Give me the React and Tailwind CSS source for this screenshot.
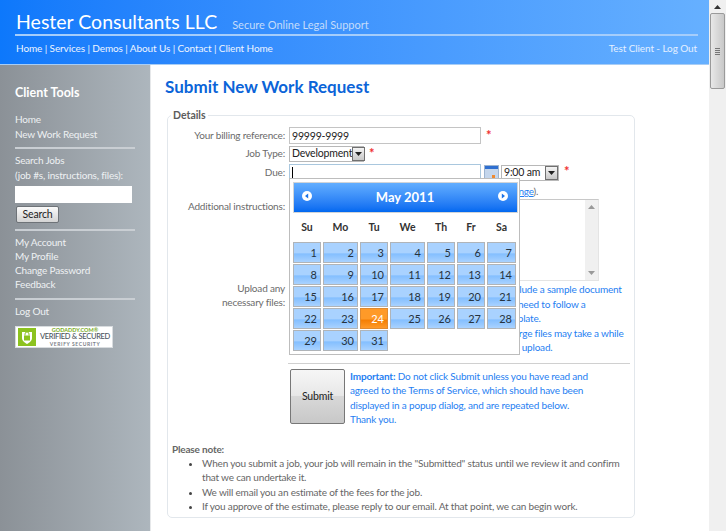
const font = { fontFamily: '"Lato", sans-serif' };

const weeks = [
  [1, 2, 3, 4, 5, 6, 7],
  [8, 9, 10, 11, 12, 13, 14],
  [15, 16, 17, 18, 19, 20, 21],
  [22, 23, 24, 25, 26, 27, 28],
  [29, 30, 31],
];

function Star() {
  return <span className="text-[#f03030] font-bold text-[13px] leading-none">*</span>;
}

function Arrow() {
  return (
    <span className="w-[13px] h-full border border-[#707070] bg-gradient-to-b from-[#f4f4f4] to-[#c8c8c8] flex items-center justify-center shrink-0">
      <svg width="7" height="4" viewBox="0 0 7 4"><path d="M0 0h7L3.5 4z" fill="#222" /></svg>
    </span>
  );
}

function CalendarIcon() {
  return (
    <svg width="15" height="16" viewBox="0 0 15 16" className="shrink-0">
      <rect x="0.5" y="0.5" width="14" height="15" fill="#c4d6ec" stroke="#9db4d0" />
      <rect x="1" y="1" width="13" height="3" fill="#2f6fd0" />
      <rect x="8" y="10" width="3" height="3" fill="#f08a30" />
    </svg>
  );
}

function CircleArrow({ dir }) {
  return (
    <svg width="10" height="10" viewBox="0 0 10 10">
      <circle cx="5" cy="5" r="5" fill="#fff" />
      <path d={dir === "left" ? "M6.2 2.5v5L3 5z" : "M3.8 2.5v5L7 5z"} fill="#1a72e8" />
    </svg>
  );
}

function Datepicker() {
  return (
    <div className="absolute left-[121px] top-[56px] w-[231px] h-[177px] bg-white border border-[#bdbdbd] pl-[3px] pt-[3px] tracking-normal">
      <div className="w-[225px] h-[31px] border border-[#d0d4d8] bg-gradient-to-b from-[#62aeff] to-[#0068f0] flex items-center justify-between pl-[8px] pr-[9px]">
        <span className="mb-[4px] flex"><CircleArrow dir="left" /></span>
        <span className="text-white font-bold text-[13px]">May 2011</span>
        <span className="mb-[4px] flex"><CircleArrow dir="right" /></span>
      </div>
      <div className="grid grid-cols-[28px_35px_28px_35px_28px_28px_29px] gap-x-[2px] h-[29px] items-center text-center text-[10.5px] font-bold text-[#333] w-[223px]">
        {["Su", "Mo", "Tu", "We", "Th", "Fr", "Sa"].map((d) => (
          <span key={d}>{d}</span>
        ))}
      </div>
      <div className="grid grid-cols-[28px_35px_28px_35px_28px_28px_29px] gap-x-[2px] gap-y-[1px] auto-rows-[21px] w-[223px]">
        {weeks.flat().map((d) => (
          <div
            key={d}
            className={
              d === 24
                ? "border border-[#e08a30] bg-[linear-gradient(#ff9a28_0%,#ff9a28_50%,#f57f05_60%,#ff9a28_100%)] text-white text-right pr-[3px] text-[11px] leading-[20px]"
                : "border border-[#b0b4b8] bg-[linear-gradient(#a9d2ff_0%,#a9d2ff_50%,#84bfff_58%,#a9d2ff_100%)] text-[#26323e] text-right pr-[3px] text-[11px] leading-[20px]"
            }
          >
            {d}
          </div>
        ))}
      </div>
    </div>
  );
}

function Header() {
  return (
    <header className="h-[65px] bg-gradient-to-r from-[#0d78fb] to-[#66b0ff] border-b border-[#a8cdf5] pl-[15px] pr-[11px] text-white shrink-0">
      <div className="flex items-baseline h-[36px] border-b-2 border-[#a5cdfb] pt-[9px]">
        <span className="text-[19.5px] leading-[26px] ml-px">Hester Consultants LLC</span>
        <span className="text-[11px] text-[#c4dcfb] ml-[15px]">Secure Online Legal Support</span>
      </div>
      <div className="flex justify-between text-[10px] tracking-[-0.1px] mt-[5px] px-px text-[#eef5ff]">
        <span>Home | Services | Demos | About Us | Contact | Client Home</span>
        <span className="text-[#e4f0ff]">Test Client - Log Out</span>
      </div>
    </header>
  );
}

function Sidebar() {
  return (
    <aside className="w-[151px] shrink-0 bg-gradient-to-r from-[#8b9197] to-[#adb6bd] border-r border-[#e6e8ea] pl-[15px] pt-[20px] text-[#eef1f3] text-[10px] tracking-[-0.18px] leading-[14.2px]">
      <div className="font-bold text-[12.5px] tracking-normal leading-[16px] text-white mb-[11px]">Client Tools</div>
      <div>Home</div>
      <div className="mt-px">New Work Request</div>
      <div className="h-[2px] bg-[#c9ced3] w-[120px] mt-[6px] mb-[4px]" />
      <div>Search Jobs</div>
      <div className="whitespace-nowrap">(job #s, instructions, files):</div>
      <input className="block mt-[4px] w-[117px] h-[17px] bg-white" />
      <button className="block mt-[3px] ml-px w-[43px] h-[17px] rounded-[2px] border border-[#6e7378] bg-gradient-to-b from-[#fafafa] to-[#d4d4d4] text-[#222] text-[10.5px] leading-none">
        Search
      </button>
      <div className="h-[2px] bg-[#c9ced3] w-[120px] mt-[6px] mb-[4px]" />
      <div>My Account</div>
      <div>My Profile</div>
      <div>Change Password</div>
      <div>Feedback</div>
      <div className="h-[2px] bg-[#c9ced3] w-[120px] mt-[6px] mb-[4px]" />
      <div>Log Out</div>
      <div className="mt-[8px] w-[98px] h-[22px] bg-white border border-[#d8dcdf] flex items-center pl-[2px] gap-[3px] tracking-normal">
        <svg width="18" height="18" viewBox="0 0 18 18" className="shrink-0">
          <rect width="18" height="18" fill="#8cc21f" />
          <path d="M4 4h10v6c0 3-2.5 4.5-5 6-2.500-1.500-5-3-5-6z" fill="#fff" />
          <rect x="6" y="7.500" width="6" height="5" fill="#8cc21f" />
          <path d="M7 7.500V6a2 2 0 0 1 4 0v1.500" fill="none" stroke="#8cc21f" />
        </svg>
        <div className="flex flex-col items-center leading-none w-[72px]">
          <span className="text-[5.5px] font-bold text-[#79ab1a] leading-[6px]">GODADDY.COM®</span>
          <span className="text-[7.5px] text-[#4c545c] tracking-[-0.3px] leading-[8px] font-medium whitespace-nowrap">VERIFIED &amp; SECURED</span>
          <span className="text-[5px] font-bold text-[#7a8088] tracking-[0.6px] leading-[6px]">VERIFY SECURITY</span>
        </div>
      </div>
    </aside>
  );
}

function Label({ children, className = "" }) {
  return <div className={"text-right text-[#6b6b6b] pr-[4px] whitespace-nowrap " + className}>{children}</div>;
}

function Form() {
  return (
    <fieldset className="relative w-[468px] min-w-0 h-[410px] ml-[16px] mt-[9px] border border-[#e2e7ec] rounded-[5px] text-[10px] tracking-[-0.18px] leading-[14.3px]">
      <legend className="ml-[3px] px-[2px] text-[10.5px] tracking-normal font-bold text-[#5c5c5c] leading-[14px]">Details</legend>

      <div className="grid grid-cols-[121px_1fr] pt-[5px]">
        <Label className="leading-[16px]">Your billing reference:</Label>
        <div className="flex items-center gap-[5px] h-[17px]">
          <input
            readOnly
            value="99999-9999"
            className="w-[192px] h-[17px] border border-[#c4c4c4] px-[2px] text-[10.5px] text-[#222]"
          />
          <Star />
        </div>

        <Label className="leading-[17px] mt-px">Job Type:</Label>
        <div className="flex items-center gap-[5px] h-[17px] mt-px">
          <div className="w-[75px] h-[16px] border border-[#b8b8b8] flex items-center justify-between pl-[2px] text-[#222] text-[10.5px] whitespace-nowrap">
            Development
            <Arrow />
          </div>
          <Star />
        </div>

        <Label className="leading-[17px] mt-[2px]">Due:</Label>
        <div className="flex items-center h-[17px] mt-[2px]">
          <div className="w-[192px] h-[17px] border border-[#a9c7de] flex items-center pl-[2px]">
            <div className="w-px h-[12px] bg-black" />
          </div>
          <span className="ml-[3px] flex"><CalendarIcon /></span>
          <div className="ml-[2px] w-[58px] h-[16px] border border-[#b8b8b8] flex items-center justify-between pl-[2px] text-[#222] text-[10.5px] whitespace-nowrap">
            9:00 am
            <Arrow />
          </div>
          <span className="ml-[5px]"><Star /></span>
        </div>

        <div />
        <div className="h-[18px] pl-[198px] leading-[20px] text-[#6b6b6b] whitespace-nowrap">
          (<span className="text-[#1f80f2] underline">date range</span>).
        </div>

        <Label>Additional instructions:</Label>
        <div className="h-[82px] w-[310px] border border-[#e4e4e4] border-t-[#c8c8c8] flex justify-end">
          <div className="w-[13px] h-full bg-[#f0f0f0] flex flex-col items-center justify-between py-[5px]">
            <svg width="7" height="4" viewBox="0 0 7 4"><path d="M3.500 0L7 4H0z" fill="#999" /></svg>
            <svg width="7" height="4" viewBox="0 0 7 4"><path d="M0 0h7L3.500 4z" fill="#999" /></svg>
          </div>
        </div>

        <Label>Upload any<br />necessary files:</Label>
        <div className="text-[#1f80f2] mt-px pl-[180px] h-[81px] leading-[14.6px] whitespace-nowrap">
          <div>You may include a sample document</div>
          <div>file or if we need to follow a</div>
          <div>or your template.</div>
          <div>Note that large files may take a while</div>
          <div>to finish the upload.</div>
        </div>
      </div>

      <div className="h-[1px] bg-[#d0d0d0] w-[342px] ml-[120px]" />

      <div className="flex ml-[122px] mt-[5px]">
        <button className="w-[55px] h-[55px] shrink-0 border border-[#777] rounded-[2px] bg-[linear-gradient(#f6f6f6_0%,#e8e8e8_48%,#d8d8d8_50%,#c8c8c8_100%)] text-[#222] text-[10.5px]">
          Submit
        </button>
        <div className="ml-[5px] text-[#1f80f2] leading-[14.4px] whitespace-nowrap">
          <div><b>Important:</b> Do not click Submit unless you have read and</div>
          <div>agreed to the Terms of Service, which should have been</div>
          <div>displayed in a popup dialog, and are repeated below.</div>
          <div>Thank you.</div>
        </div>
      </div>

      <div className="mt-[15px] ml-[4px] text-[#666] leading-[14.4px]">
        <div className="font-bold">Please note:</div>
        <ul className="list-disc pl-[30px] marker:text-[#444]">
          <li>When you submit a job, your job will remain in the "Submitted" status until we review it and confirm that we can undertake it.</li>
          <li>We will email you an estimate of the fees for the job.</li>
          <li>If you approve of the estimate, please reply to our email. At that point, we can begin work.</li>
        </ul>
      </div>

      <Datepicker />
    </fieldset>
  );
}

function Scrollbar() {
  return (
    <div className="w-[17px] shrink-0 bg-[#f0f0f0] h-[531px] flex flex-col items-center">
      <div className="h-[13px] flex items-center">
        <svg width="7" height="4" viewBox="0 0 7 4"><path d="M3.500 0L7 4H0z" fill="#333" /></svg>
      </div>
      <div className="w-[15px] h-[76px] border border-[#9a9a9a] rounded-[2px] bg-gradient-to-r from-[#e8e8e8] to-[#c8c8c8] flex flex-col items-center justify-center gap-px">
        <div className="w-[5px] h-px bg-[#777]" />
        <div className="w-[5px] h-px bg-[#777]" />
        <div className="w-[5px] h-px bg-[#777]" />
        <div className="w-[5px] h-px bg-[#777]" />
      </div>
    </div>
  );
}

export default function App() {
  return (
    <div className="flex w-[726px] h-[531px] overflow-hidden bg-white" style={font}>
      <div className="flex flex-col w-[709px] h-[531px]">
        <Header />
        <div className="flex flex-1 min-h-0">
          <Sidebar />
          <main className="flex-1 min-w-0">
            <h1 className="text-[#0b64d8] font-bold text-[17px] leading-[24px] ml-[14px] mt-[10px]">Submit New Work Request</h1>
            <Form />
          </main>
        </div>
      </div>
      <Scrollbar />
    </div>
  );
}
